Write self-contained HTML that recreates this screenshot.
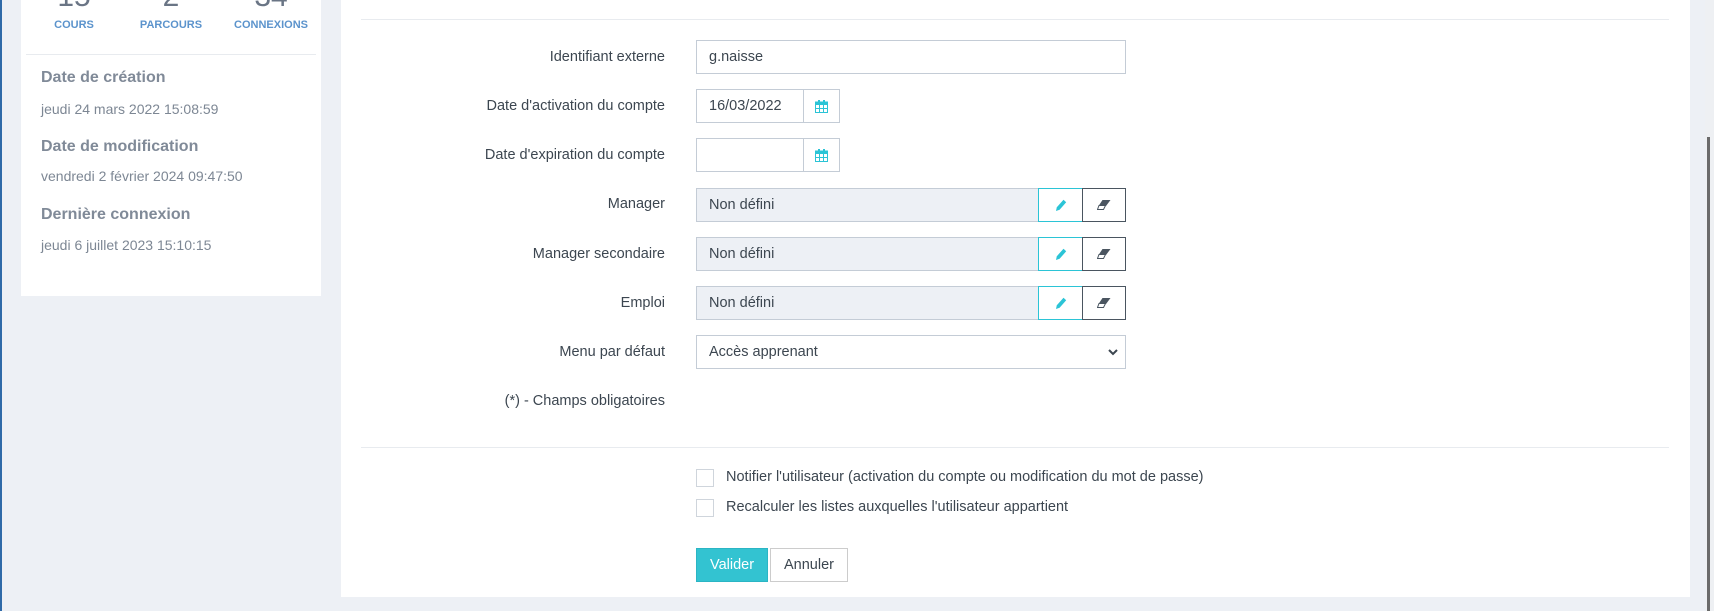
<!DOCTYPE html>
<html><head><meta charset="utf-8"><style>
*{box-sizing:border-box;margin:0;padding:0}
body{width:1714px;height:611px;background:#edf0f5;position:relative;overflow:hidden;font-family:"Liberation Sans",sans-serif;color:#3c4650}
.a{position:absolute}
.card{left:21px;top:0;width:300px;height:296px;background:#fff}
.st{font-size:11px;font-weight:bold;color:#5b93cc;top:19px;text-align:center;width:100px}
.big{font-size:30px;color:#6a7585;top:-20px;text-align:center;width:100px}
.h{font-size:16px;font-weight:bold;color:#808a98;left:41px}
.v{font-size:14px;color:#7d8794;left:41px}
.panel{left:341px;top:0;width:1349px;height:597px;background:#fff}
.lbl{font-size:14.5px;color:#3c4650;right:1049px;text-align:right;white-space:nowrap}
.inp{border:1px solid #c4ccd6;background:#fff;font-size:14.5px;padding-left:12px;display:flex;align-items:center}
.gray{background:#edf0f5}
.btn{border:1px solid;display:flex;align-items:center;justify-content:center;background:#fff}
.cb{width:18px;height:18px;border:1px solid #cfd5dc;left:696px}
.ct{font-size:14.5px;left:726px}
</style></head><body>
<div class="a" style="left:0;top:0;width:2px;height:611px;background:#2f6aa8"></div>
<div class="a card"></div>
<div class="a big" style="left:24px">15</div>
<div class="a big" style="left:121px">2</div>
<div class="a big" style="left:221px">34</div>
<div class="a st" style="left:24px">COURS</div>
<div class="a st" style="left:121px">PARCOURS</div>
<div class="a st" style="left:221px">CONNEXIONS</div>
<div class="a" style="left:26px;top:54px;width:290px;height:1px;background:#e8ebef"></div>
<div class="a h" style="top:69px">Date de création</div>
<div class="a v" style="top:101px">jeudi 24 mars 2022 15:08:59</div>
<div class="a h" style="top:138px">Date de modification</div>
<div class="a v" style="top:168px">vendredi 2 février 2024 09:47:50</div>
<div class="a h" style="top:206px">Dernière connexion</div>
<div class="a v" style="top:237px">jeudi 6 juillet 2023 15:10:15</div>

<div class="a panel"></div>
<div class="a" style="left:1705px;top:0;width:9px;height:611px;background:#eef0f3"></div>
<div class="a" style="left:1707px;top:137px;width:3px;height:474px;background:#6b6b6b"></div>
<div class="a" style="left:361px;top:19px;width:1308px;height:1px;background:#e8ebef"></div>

<div class="a lbl" style="top:49px">Identifiant externe</div>
<div class="a inp" style="left:696px;top:40px;width:430px;height:34px">g.naisse</div>

<div class="a lbl" style="top:98px">Date d'activation du compte</div>
<div class="a inp" style="left:696px;top:89px;width:108px;height:34px">16/03/2022</div>
<div class="a btn" style="left:803px;top:89px;width:37px;height:34px;border-color:#c4ccd6"><svg width="13" height="13" viewBox="0 0 13 13"><rect x="0.5" y="2" width="12" height="10.5" fill="none" stroke="#2bc4d6"/><rect x="0.5" y="2" width="12" height="3" fill="#2bc4d6"/><path d="M4.5 5v7M8.5 5v7M0.5 8.5h12" stroke="#2bc4d6"/><rect x="3" y="0" width="2" height="3" fill="#2bc4d6"/><rect x="8" y="0" width="2" height="3" fill="#2bc4d6"/></svg></div>

<div class="a lbl" style="top:147px">Date d'expiration du compte</div>
<div class="a inp" style="left:696px;top:138px;width:108px;height:34px"></div>
<div class="a btn" style="left:803px;top:138px;width:37px;height:34px;border-color:#c4ccd6"><svg width="13" height="13" viewBox="0 0 13 13"><rect x="0.5" y="2" width="12" height="10.5" fill="none" stroke="#2bc4d6"/><rect x="0.5" y="2" width="12" height="3" fill="#2bc4d6"/><path d="M4.5 5v7M8.5 5v7M0.5 8.5h12" stroke="#2bc4d6"/><rect x="3" y="0" width="2" height="3" fill="#2bc4d6"/><rect x="8" y="0" width="2" height="3" fill="#2bc4d6"/></svg></div>

<div class="a lbl" style="top:196px">Manager</div>
<div class="a inp gray" style="left:696px;top:188px;width:343px;height:34px">Non défini</div>
<div class="a btn" style="left:1038px;top:188px;width:45px;height:34px;border-color:#2bc4d6"><svg width="14" height="14" viewBox="0 0 14 14"><path d="M2 13l.8-3.8 6.7-7.4 2.7 2.5-6.6 7.5z" fill="#2bc4d6"/></svg></div>
<div class="a btn" style="left:1082px;top:188px;width:44px;height:34px;border-color:#4a5560"><svg width="14" height="12" viewBox="0 0 14 12"><path d="M5.5 1h8L9 7H1.5z" fill="#4a5560"/><path d="M2 6.5h6.5L6.5 10.5H.5z" fill="#fff" stroke="#4a5560"/></svg></div>

<div class="a lbl" style="top:246px">Manager secondaire</div>
<div class="a inp gray" style="left:696px;top:237px;width:343px;height:34px">Non défini</div>
<div class="a btn" style="left:1038px;top:237px;width:45px;height:34px;border-color:#2bc4d6"><svg width="14" height="14" viewBox="0 0 14 14"><path d="M2 13l.8-3.8 6.7-7.4 2.7 2.5-6.6 7.5z" fill="#2bc4d6"/></svg></div>
<div class="a btn" style="left:1082px;top:237px;width:44px;height:34px;border-color:#4a5560"><svg width="14" height="12" viewBox="0 0 14 12"><path d="M5.5 1h8L9 7H1.5z" fill="#4a5560"/><path d="M2 6.5h6.5L6.5 10.5H.5z" fill="#fff" stroke="#4a5560"/></svg></div>

<div class="a lbl" style="top:295px">Emploi</div>
<div class="a inp gray" style="left:696px;top:286px;width:343px;height:34px">Non défini</div>
<div class="a btn" style="left:1038px;top:286px;width:45px;height:34px;border-color:#2bc4d6"><svg width="14" height="14" viewBox="0 0 14 14"><path d="M2 13l.8-3.8 6.7-7.4 2.7 2.5-6.6 7.5z" fill="#2bc4d6"/></svg></div>
<div class="a btn" style="left:1082px;top:286px;width:44px;height:34px;border-color:#4a5560"><svg width="14" height="12" viewBox="0 0 14 12"><path d="M5.5 1h8L9 7H1.5z" fill="#4a5560"/><path d="M2 6.5h6.5L6.5 10.5H.5z" fill="#fff" stroke="#4a5560"/></svg></div>

<div class="a lbl" style="top:344px">Menu par défaut</div>
<div class="a inp" style="left:696px;top:335px;width:430px;height:34px">Accès apprenant</div>
<svg class="a" style="left:1108px;top:348px" width="10" height="8" viewBox="0 0 10 8"><path d="M1 2l4 4 4-4" fill="none" stroke="#3c4650" stroke-width="2"/></svg>

<div class="a lbl" style="top:393px">(*) - Champs obligatoires</div>
<div class="a" style="left:361px;top:447px;width:1308px;height:1px;background:#e8ebef"></div>

<div class="a cb" style="top:469px"></div>
<div class="a ct" style="top:469px">Notifier l'utilisateur (activation du compte ou modification du mot de passe)</div>
<div class="a cb" style="top:499px"></div>
<div class="a ct" style="top:499px">Recalculer les listes auxquelles l'utilisateur appartient</div>

<div class="a btn" style="left:696px;top:548px;width:72px;height:34px;background:#33c3d1;border-color:#2bb5c4;color:#fff;font-size:14.5px">Valider</div>
<div class="a btn" style="left:770px;top:548px;width:78px;height:34px;border-color:#ccc;font-size:14.5px;color:#3c4650">Annuler</div>
</body></html>
